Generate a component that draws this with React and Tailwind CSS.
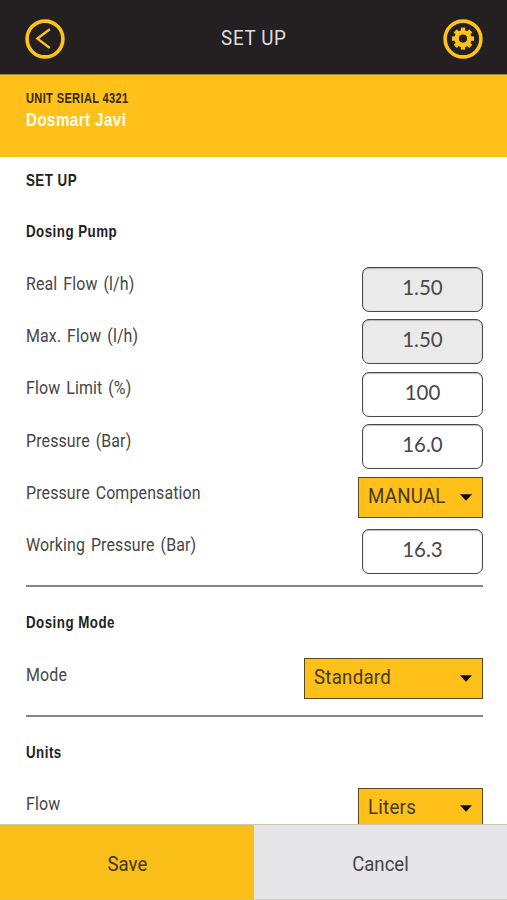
import React from 'react';

const labelFont = "font-['Roboto',sans-serif]";
const boldFont = "inline-block origin-left font-['Liberation_Sans',sans-serif] font-bold whitespace-nowrap";

const teeth = [0, 45, 90, 135, 180, 225, 270, 315];

const BackIcon = () => (
  <svg width="40" height="40" viewBox="0 0 40 40" fill="none" stroke="#ffc219">
    <circle cx="20" cy="20" r="17.9" strokeWidth="3.6" />
    <path d="M24.8 10.3 L12.4 19.6 L24.8 29" strokeWidth="2.4" />
  </svg>
);

const GearIcon = () => (
  <svg width="40" height="40" viewBox="0 0 40 40" fill="none" stroke="#ffc219">
    <circle cx="20" cy="20" r="17.9" strokeWidth="3.6" />
    <circle cx="20" cy="19.6" r="6.4" strokeWidth="4.6" />
    {teeth.map((a) => (
      <path key={a} d="M17.8 12.4 V8.6 H22.2 V12.4 Z" fill="#ffc219" stroke="none" transform={`rotate(${a} 20 19.6)`} />
    ))}
  </svg>
);

const Row = ({ label, children }) => (
  <div className="flex justify-between items-start h-[52.4px]">
    <span className={`${labelFont} origin-left scale-x-[0.91] mt-[4.5px] text-[17.5px] leading-6 tracking-[0.15px] [word-spacing:2px] text-[#464646]`}>{label}</span>
    {children}
  </div>
);

const Field = ({ value, disabled }) => (
  <div className={`w-[121px] h-[45px] pt-[7px] rounded-[7px] border border-[#484848] shadow-[inset_0_0.5px_1px_#8a8a8a] text-center font-['Lato',sans-serif] text-[20.5px] leading-6 text-[#484848] ${disabled ? 'bg-[#eaeaea]' : 'bg-white'}`}>
    {value}
  </div>
);

const Select = ({ value, wide }) => (
  <div className={`flex items-center justify-between h-[41px] pl-[9px] pr-[10px] border border-[#5b4a1c] bg-[#ffc019] ${wide ? 'w-[179px]' : 'w-[125px]'}`}>
    <span className={`${labelFont} origin-left scale-x-[0.935] tracking-[0.25px] text-[20px] leading-6 text-[#463a16] -mt-[3px]`}>{value}</span>
    <svg width="12" height="7" viewBox="0 0 12 7" className="shrink-0">
      <path d="M0 0.3 H12 L6 6.7 Z" fill="#080600" />
    </svg>
  </div>
);

const Heading = ({ children }) => (
  <h2 className="h-6">
    <span className={`${boldFont} scale-x-[0.785] tracking-[0.6px] text-[17px] leading-6 text-[#222]`}>{children}</span>
  </h2>
);

/** Dosing pump set up screen. */
const App = () => {
  return (
    <div className="flex flex-col w-[507px] h-[900px] overflow-hidden bg-white">
      <header className="flex items-center justify-between shrink-0 h-[74px] pl-[25px] pr-[24px] pt-[4px] bg-[#242021]">
        <BackIcon />
        <h1 className={`${labelFont} -mt-[2px] scale-x-[0.94] tracking-[0.7px] text-[20px] text-[#dedede]`}>SET UP</h1>
        <GearIcon />
      </header>
      <div className="flex flex-col items-start shrink-0 h-[83px] pl-[26px] pt-[14px] border-t border-[#a18234] bg-[#ffc019]">
        <div className={`${boldFont} scale-x-[0.79] tracking-[0.45px] text-[14px] leading-[18px] text-[#35290f]`}>UNIT SERIAL 4321</div>
        <div className={`${boldFont} mt-px scale-x-[0.8] tracking-[0.5px] text-[19px] leading-6 text-[#fffdf0]`}>Dosmart Javi</div>
      </div>

      <main className="flex-1 min-h-0 overflow-hidden pl-[26px] pr-[24px] pt-[11px]">
        <Heading>SET UP</Heading>
        <div className="mt-[27px] mb-[24px]">
          <Heading>Dosing Pump</Heading>
        </div>
        <Row label="Real Flow (l/h)"><Field value="1.50" disabled /></Row>
        <Row label="Max. Flow (l/h)"><Field value="1.50" disabled /></Row>
        <Row label="Flow Limit (%)"><Field value="100" /></Row>
        <Row label="Pressure (Bar)"><Field value="16.0" /></Row>
        <Row label="Pressure Compensation"><Select value="MANUAL" /></Row>
        <Row label="Working Pressure (Bar)"><Field value="16.3" /></Row>
        <hr className="mt-[4px] border-0 h-[2px] bg-[#858585]" />
        <div className="mt-[23px] mb-[24px]">
          <Heading>Dosing Mode</Heading>
        </div>
        <Row label="Mode"><Select value="Standard" wide /></Row>
        <hr className="mt-[4px] border-0 h-[2px] bg-[#858585]" />
        <div className="mt-[23px] mb-[24px]">
          <Heading>Units</Heading>
        </div>
        <Row label="Flow"><Select value="Liters" /></Row>
      </main>

      <footer className={`${labelFont} flex shrink-0 h-[76px] border-t border-[#d0c8b4] text-[20px]`}>
        <button className="w-[254px] pt-[3px] border-b border-[#d5bd78] bg-[#f9be17] text-[#44370f]">
          <span className="inline-block scale-x-[0.93]">Save</span>
        </button>
        <button className="flex-1 pt-[3px] border-b border-[#cfcfd0] bg-[#e6e6e8] text-[#444]">
          <span className="inline-block scale-x-[0.93]">Cancel</span>
        </button>
      </footer>
    </div>
  );
};

export default App;
